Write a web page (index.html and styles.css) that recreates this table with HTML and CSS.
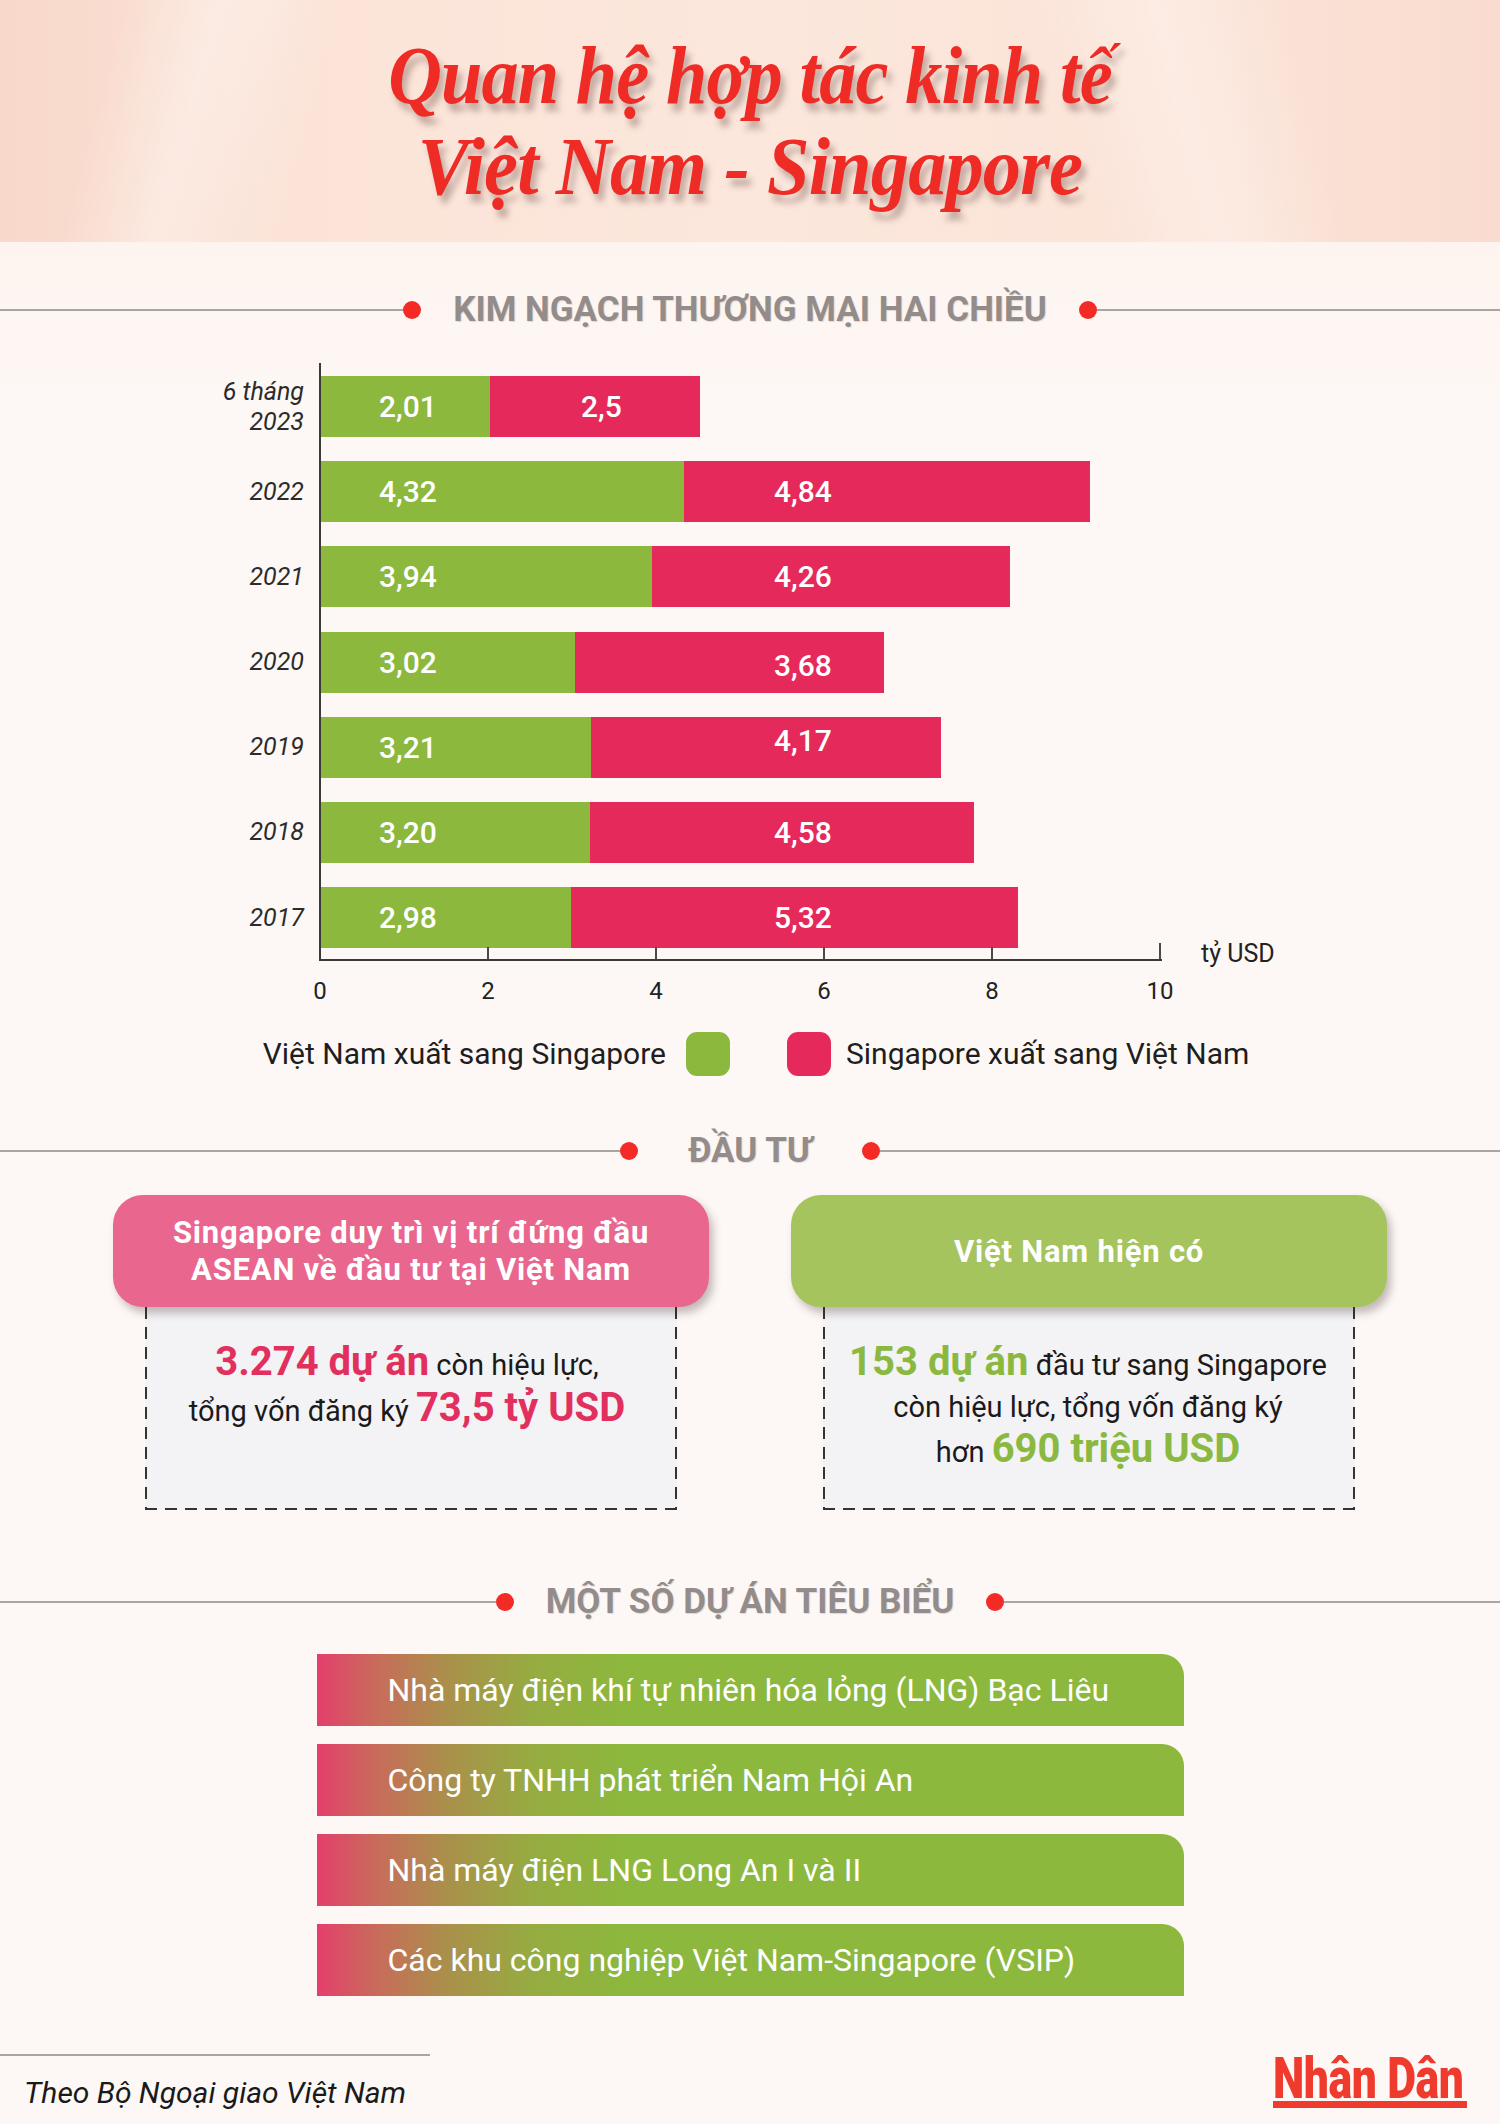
FILE: index.html
```html
<!DOCTYPE html>
<html lang="vi">
<head>
<meta charset="utf-8">
<title>Quan hệ hợp tác kinh tế Việt Nam - Singapore</title>
<link rel="stylesheet" href="styles.css">
</head>
<body>
<div class="page">
  <header class="hero">
    <h1 class="title"><span class="title-line title-line--1">Quan hệ hợp tác kinh tế</span><span class="title-line title-line--2">Việt Nam - Singapore</span></h1>
  </header>

  <div class="sec-head sec-head--trade">
    <span class="rule"></span><span class="dot"></span>
    <h2 class="sec-title">KIM NGẠCH THƯƠNG MẠI HAI CHIỀU</h2>
    <span class="dot"></span><span class="rule"></span>
  </div>

  <section class="chart">
    <div class="chart-body">
      <div class="row">
        <div class="year">6 tháng<br>2023</div>
        <div class="track">
          <div class="seg seg-vn" style="width:168.8px"></div><div class="seg seg-sg" style="width:210px"></div>
          <span class="val val-vn">2,01</span><span class="val val-sg" style="left:260px">2,5</span>
        </div>
      </div>
      <div class="row">
        <div class="year">2022</div>
        <div class="track">
          <div class="seg seg-vn" style="width:362.9px"></div><div class="seg seg-sg" style="width:406.6px"></div>
          <span class="val val-vn">4,32</span><span class="val val-sg">4,84</span>
        </div>
      </div>
      <div class="row">
        <div class="year">2021</div>
        <div class="track">
          <div class="seg seg-vn" style="width:331px"></div><div class="seg seg-sg" style="width:357.8px"></div>
          <span class="val val-vn">3,94</span><span class="val val-sg">4,26</span>
        </div>
      </div>
      <div class="row">
        <div class="year">2020</div>
        <div class="track">
          <div class="seg seg-vn" style="width:253.7px"></div><div class="seg seg-sg" style="width:309.1px"></div>
          <span class="val val-vn">3,02</span><span class="val val-sg" style="margin-top:3px">3,68</span>
        </div>
      </div>
      <div class="row">
        <div class="year">2019</div>
        <div class="track">
          <div class="seg seg-vn" style="width:269.6px"></div><div class="seg seg-sg" style="width:350.3px"></div>
          <span class="val val-vn">3,21</span><span class="val val-sg" style="margin-top:-7px">4,17</span>
        </div>
      </div>
      <div class="row">
        <div class="year">2018</div>
        <div class="track">
          <div class="seg seg-vn" style="width:268.8px"></div><div class="seg seg-sg" style="width:384.7px"></div>
          <span class="val val-vn">3,20</span><span class="val val-sg">4,58</span>
        </div>
      </div>
      <div class="row">
        <div class="year">2017</div>
        <div class="track">
          <div class="seg seg-vn" style="width:250.3px"></div><div class="seg seg-sg" style="width:446.9px"></div>
          <span class="val val-vn">2,98</span><span class="val val-sg">5,32</span>
        </div>
      </div>
      <span class="tick tick-2"></span><span class="tick tick-4"></span><span class="tick tick-6"></span><span class="tick tick-8"></span><span class="tick tick-10"></span>
      <span class="unit">tỷ USD</span>
    </div>
    <div class="axis-labels">
      <span>0</span><span>2</span><span>4</span><span>6</span><span>8</span><span>10</span>
    </div>
    <div class="legend">
      <span class="legend-text">Việt Nam xuất sang Singapore</span>
      <span class="swatch swatch-vn"></span>
      <span class="swatch swatch-sg"></span>
      <span class="legend-text">Singapore xuất sang Việt Nam</span>
    </div>
  </section>

  <div class="sec-head sec-head--invest">
    <span class="rule"></span><span class="dot"></span>
    <h2 class="sec-title">ĐẦU TƯ</h2>
    <span class="dot"></span><span class="rule"></span>
  </div>

  <section class="invest">
    <div class="card">
      <div class="card-head card-head--sg">Singapore duy trì vị trí đứng đầu<br>ASEAN về đầu tư tại Việt Nam</div>
      <div class="card-body">
        <p class="card-text card-text--sg"><b>3.274 dự án</b> còn hiệu lực,<br>tổng vốn đăng ký <b>73,5 tỷ USD</b></p>
      </div>
    </div>
    <div class="card">
      <div class="card-head card-head--vn">Việt Nam hiện có</div>
      <div class="card-body">
        <p class="card-text card-text--vn"><b>153 dự án</b> đầu tư sang Singapore<br>còn hiệu lực, tổng vốn đăng ký<br>hơn <b>690 triệu USD</b></p>
      </div>
    </div>
  </section>

  <div class="sec-head sec-head--projects">
    <span class="rule"></span><span class="dot"></span>
    <h2 class="sec-title">MỘT SỐ DỰ ÁN TIÊU BIỂU</h2>
    <span class="dot"></span><span class="rule"></span>
  </div>

  <ul class="projects">
    <li class="project">Nhà máy điện khí tự nhiên hóa lỏng (LNG) Bạc Liêu</li>
    <li class="project">Công ty TNHH phát triển Nam Hội An</li>
    <li class="project">Nhà máy điện LNG Long An I và II</li>
    <li class="project">Các khu công nghiệp Việt Nam-Singapore (VSIP)</li>
  </ul>

  <footer class="footer">
    <div class="source">
      <div class="source-rule"></div>
      <p class="source-text">Theo Bộ Ngoại giao Việt Nam</p>
    </div>
    <div class="logo">
      <span class="logo-text">Nhân Dân</span>
      <div class="logo-bar"></div>
    </div>
  </footer>
</div>
</body>
</html>
```

FILE: styles.css
```css
* { box-sizing: border-box; }

html, body {
  margin: 0;
  padding: 0;
  background: #fdf8f6;
}

body {
  font-family: Roboto, "Noto Sans", "DejaVu Sans", sans-serif;
  color: #1e1e1e;
}

.page {
  width: 1500px;
  min-height: 2124px;
  background: linear-gradient(180deg, #fef4ef 242px, #fdf8f6 420px);
}

/* ---------- Hero ---------- */
.hero {
  height: 242px;
  overflow: hidden;
  background:
    linear-gradient(105deg, rgba(255,255,255,0) 8%, rgba(255,255,255,0.35) 14%, rgba(255,255,255,0) 22%),
    linear-gradient(75deg, rgba(255,255,255,0) 70%, rgba(255,255,255,0.3) 78%, rgba(255,255,255,0) 86%),
    linear-gradient(90deg, #f8d8ca 0%, #fbe3d7 18%, #fce7dc 50%, #fbe3d7 82%, #f9dccf 100%);
}

.title {
  margin: 0;
  padding-top: 30px;
  text-align: center;
  font-family: "Liberation Serif", "DejaVu Serif", serif;
  font-style: italic;
  font-weight: 700;
  font-size: 82px;
  line-height: 91px;
  color: #ee2b25;
  text-shadow: 5px 8px 7px rgba(95, 60, 55, 0.35);
  letter-spacing: -1px;
}

.title-line {
  display: block;
  white-space: nowrap;
}

.title-line--1 { transform: scaleX(0.907); }
.title-line--2 { transform: scaleX(0.934); }

/* ---------- Section headings ---------- */
.sec-head {
  display: flex;
  align-items: center;
  height: 40px;
  gap: 32px;
}

.sec-head--trade { margin-top: 48px; }
.sec-head--invest { margin-top: 55px; gap: 50px; }
.sec-head--projects { margin-top: 72px; }

.sec-head .rule {
  flex: 1;
  height: 2px;
  background: #aaa5a3;
}

.sec-head .dot {
  width: 18px;
  height: 18px;
  border-radius: 50%;
  background: #f42a27;
  flex: none;
}

.sec-head .dot:nth-child(2) { margin-left: -32px; }
.sec-head .dot:nth-child(4) { margin-right: -32px; }
.sec-head--invest .dot:nth-child(2) { margin-left: -50px; }
.sec-head--invest .dot:nth-child(4) { margin-right: -50px; }

.sec-title {
  margin: 0;
  font-family: Roboto, sans-serif;
  font-weight: 700;
  font-size: 35px;
  line-height: 40px;
  color: #938c8a;
  text-shadow: 1px 1px 1px rgba(0, 0, 0, 0.12);
  white-space: nowrap;
}

/* ---------- Chart ---------- */
.chart { margin-top: 33px; }

.chart-body {
  position: relative;
  display: flex;
  flex-direction: column;
  gap: 24.2px;
  padding: 13px 0 12px;
}

.chart-body::before {
  content: "";
  position: absolute;
  left: 319px;
  top: 0;
  bottom: 0;
  width: 2px;
  background: #3a3a3a;
}

.chart-body::after {
  content: "";
  position: absolute;
  left: 319px;
  bottom: -1px;
  width: 843px;
  height: 2px;
  background: #3a3a3a;
}

.row {
  display: flex;
  align-items: center;
  height: 61px;
}

.year {
  width: 319px;
  padding-right: 15px;
  text-align: right;
  font-style: italic;
  font-size: 25px;
  line-height: 30px;
  color: #2b2b2b;
}

.track {
  position: relative;
  display: flex;
  height: 61px;
  margin-left: 2px;
}

.seg { height: 100%; }
.seg-vn { background: #8cb83e; }
.seg-sg { background: #e52a5b; }

.val {
  position: absolute;
  top: 0;
  line-height: 61px;
  font-size: 30px;
  font-weight: 500;
  color: #fff;
  white-space: nowrap;
}

.val-vn { left: 58px; }
.val-sg { left: 453px; }

.tick {
  position: absolute;
  bottom: 1px;
  width: 2px;
  height: 12px;
  background: #4a4a4a;
}

.tick-2 { left: 487px; }
.tick-4 { left: 655px; }
.tick-6 { left: 823px; }
.tick-8 { left: 991px; }
.tick-10 { left: 1159px; height: 16px; }

.unit {
  position: absolute;
  left: 1201px;
  bottom: -6px;
  font-size: 25px;
  line-height: 24px;
  color: #222;
}

.axis-labels {
  display: flex;
  margin-left: 236px;
  padding-top: 19px;
}

.axis-labels span {
  width: 168px;
  text-align: center;
  font-size: 24px;
  line-height: 24px;
  color: #222;
}

.legend {
  display: flex;
  align-items: center;
  justify-content: center;
  margin-top: 29px;
  padding-left: 12px;
  height: 44px;
}

.legend-text {
  font-size: 30px;
  line-height: 44px;
  color: #1e1e1e;
  white-space: nowrap;
}

.swatch {
  width: 44px;
  height: 44px;
  border-radius: 11px;
  flex: none;
}

.swatch-vn { background: #8cb83e; margin-left: 20px; }
.swatch-sg { background: #e52a5b; margin-left: 57px; margin-right: 15px; }

/* ---------- Investment ---------- */
.invest {
  display: flex;
  justify-content: center;
  gap: 82px;
  margin-top: 24px;
}

.card {
  width: 596px;
  display: flex;
  flex-direction: column;
  align-items: center;
}

.card-head {
  position: relative;
  z-index: 1;
  width: 596px;
  height: 112px;
  border-radius: 30px;
  display: flex;
  align-items: center;
  justify-content: center;
  text-align: center;
  color: #fff;
  font-weight: 700;
  font-size: 31px;
  letter-spacing: 0.8px;
  line-height: 37px;
  box-shadow: 4px 6px 8px rgba(60, 40, 40, 0.3);
}

.card-head--sg { background: #e9668f; }
.card-head--vn { background: #a5c45e; padding-right: 20px; }

.card-body {
  width: 532px;
  height: 223px;
  margin-top: -20px;
  padding-top: 54px;
  background-color: #f3f2f5;
  background-image:
    linear-gradient(90deg, #333 60%, transparent 60%),
    linear-gradient(90deg, #333 60%, transparent 60%),
    linear-gradient(180deg, #333 60%, transparent 60%),
    linear-gradient(180deg, #333 60%, transparent 60%);
  background-size: 20px 2px, 20px 2px, 2px 20px, 2px 20px;
  background-position: 0 0, 0 100%, 0 0, 100% 0;
  background-repeat: repeat-x, repeat-x, repeat-y, repeat-y;
}

.card-text {
  margin: 0;
  text-align: center;
  font-size: 29px;
  line-height: 41.5px;
  color: #1a1a1a;
}

.card-text--sg { padding-right: 8px; }
.card-text--vn { padding-right: 2px; }

.card-text b {
  font-weight: 700;
  font-size: 40px;
}

.card-text--sg b { color: #e1305d; }
.card-text--vn b { color: #8bb940; }

/* ---------- Projects ---------- */
.projects {
  list-style: none;
  margin: 32px auto 0;
  padding: 0;
  width: 867px;
  display: flex;
  flex-direction: column;
  gap: 18px;
}

.project {
  height: 72px;
  padding-left: 71px;
  line-height: 72px;
  font-size: 32px;
  color: #fff;
  white-space: nowrap;
  border-radius: 0 22px 0 0;
  background: linear-gradient(90deg, #e43f6c 0%, #c86c5a 7%, #aa904b 15%, #96ac41 25%, #8cb83d 36%, #8cb83d 100%);
}

/* ---------- Footer ---------- */
.footer {
  display: flex;
  justify-content: space-between;
  align-items: flex-start;
  margin-top: 58px;
}

.source-rule {
  width: 430px;
  height: 2px;
  background: #aaa5a3;
}

.source-text {
  margin: 20px 0 0 24px;
  font-style: italic;
  font-size: 30px;
  line-height: 34px;
  color: #1a1a1a;
}

.logo {
  width: 194px;
  margin-top: 3px;
  margin-right: 33px;
}

.logo-text {
  display: block;
  font-family: Roboto, sans-serif;
  font-weight: 900;
  font-size: 57px;
  line-height: 44px;
  color: #ef3b2d;
  white-space: nowrap;
  transform: scaleX(0.78);
  transform-origin: left center;
  letter-spacing: -0.5px;
}

.logo-bar {
  height: 7px;
  background: #ef3b2d;
}
```
